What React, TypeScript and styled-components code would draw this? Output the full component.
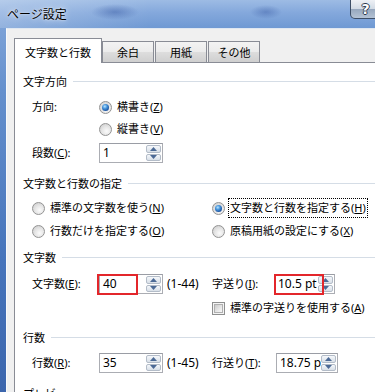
import React from 'react'
import styled, { createGlobalStyle, css } from 'styled-components'

const GlobalStyle = createGlobalStyle`
  html, body {
    margin: 0;
    padding: 0;
  }
  body {
    width: 375px;
    height: 392px;
    overflow: hidden;
    background: #f0f0f0;
    font-family: "Noto Sans", "Noto Sans CJK JP", sans-serif;
    color: #000;
  }
`

const Window = styled.div`
  width: 375px;
  height: 392px;
  overflow: hidden;
  display: flex;
  flex-direction: column;
  background: linear-gradient(180deg, #86a9db 0, #6590cd 90px, #4674bb 260px, #3c66ad 392px);
`

const TitleBar = styled.div`
  height: 28px;
  flex: none;
  display: flex;
  align-items: flex-start;
  background:
    radial-gradient(ellipse 24px 8px at 115px 12px, rgba(66, 100, 170, 0.55), transparent),
    radial-gradient(ellipse 16px 7px at 266px 12px, rgba(66, 100, 170, 0.5), transparent),
    linear-gradient(90deg, rgba(255, 255, 255, 0.25), rgba(255, 255, 255, 0) 40%),
    linear-gradient(180deg, #9dbbe4 0%, #84a8dc 45%, #6f99d3 100%);
`

const Title = styled.div`
  padding: 6px 0 0 7px;
  font-family: "Noto Sans CJK JP", sans-serif;
  font-size: 12px;
  line-height: 16px;
  text-shadow: 0 0 6px rgba(255, 255, 255, 0.9), 0 0 2px rgba(255, 255, 255, 0.8);
`

const HelpButton = styled.div`
  margin-left: auto;
  margin-right: -6px;
  width: 31px;
  height: 19px;
  box-sizing: border-box;
  border: 1px solid #3d4e66;
  border-top: none;
  border-radius: 0 0 0 5px;
  background: linear-gradient(180deg, #eef1f5 0%, #d3dbe5 48%, #97a8be 52%, #b5c3d5 100%);
  display: flex;
  justify-content: center;
  align-items: center;
  color: #fff;
  font: bold 14px "DejaVu Sans", sans-serif;
  text-shadow: 1px 0 0 #2d3a4e, -1px 0 0 #2d3a4e, 0 1px 0 #2d3a4e, 0 -1px 0 #2d3a4e;
`

const Body = styled.div`
  flex: 1;
  display: flex;
  padding-left: 6px;
`

const Client = styled.div`
  flex: 1;
  background: #f0f0f0;
  border-left: 1px solid #f8fafc;
  border-top: 1px solid #dfe7f1;
  padding: 9px 0 0 7px;
  overflow: hidden;
`

const Tabs = styled.div`
  display: flex;
  align-items: flex-end;
  gap: 1px;
  height: 24px;
  position: relative;
  z-index: 1;
`

const Tab = styled.div<{ $active?: boolean; $w: number }>`
  width: ${p => p.$w}px;
  box-sizing: border-box;
  border: 1px solid #898c95;
  border-bottom: none;
  font-size: 11px;
  line-height: 16px;
  display: flex;
  justify-content: center;
  align-items: center;
  ${p => p.$active ? css`
    height: 25px;
    margin-bottom: -1px;
    margin-right: -1px;
    padding-top: 3px;
    background: #fff;
  ` : css`
    height: 21px;
    padding-top: 1px;
    background: linear-gradient(180deg, #f3f3f3 0%, #ebebeb 50%, #dddddd 52%, #cfcfcf 100%);
  `}
`

const Panel = styled.div`
  width: 430px;
  height: 400px;
  box-sizing: border-box;
  background: #fff;
  border: 1px solid #898c95;
  padding: 8px 0 0 8px;
`

const Heading = styled.div<{ $mt: number }>`
  display: flex;
  align-items: center;
  height: 20px;
  margin-top: ${p => p.$mt}px;
  font-size: 11px;
  &::after {
    content: '';
    flex: 1;
    height: 1px;
    margin-left: 6px;
    background: #d5dde6;
  }
`

const Row = styled.div<{ $mt: number }>`
  display: flex;
  align-items: center;
  height: 20px;
  margin-top: ${p => p.$mt}px;
  padding-left: 9px;
  font-size: 11px;
  line-height: 16px;
  white-space: nowrap;
`

const Cell = styled.div<{ $w: number; $ml?: number }>`
  width: ${p => p.$w}px;
  margin-left: ${p => p.$ml ?? 0}px;
  flex: none;
  display: flex;
  align-items: center;
`

const Choice = styled.label`
  display: flex;
  align-items: center;
  gap: 5px;
`

const Radio = styled.span<{ $on?: boolean }>`
  width: 13px;
  height: 13px;
  box-sizing: border-box;
  flex: none;
  border-radius: 50%;
  border: 1px solid #939393;
  background: radial-gradient(circle at 60% 65%, #fbfbfb 0, #e6e6e6 45%, #cdcdcd 90%);
  display: flex;
  justify-content: center;
  align-items: center;
  &::after {
    content: '';
    display: ${p => (p.$on ? 'block' : 'none')};
    width: 7px;
    height: 7px;
    border-radius: 50%;
    background: radial-gradient(circle at 40% 35%, #b9e5ff 0, #4896dc 35%, #124593 80%);
  }
`

const Check = styled.span`
  width: 13px;
  height: 13px;
  box-sizing: border-box;
  flex: none;
  border: 1px solid #8e8f8f;
  background: #f4f4f4;
  padding: 1px;
  &::after {
    content: '';
    display: block;
    width: 9px;
    height: 9px;
    box-sizing: border-box;
    border: 1px solid #b0b0b0;
    background: linear-gradient(135deg, #cbcbcb 0%, #e6e6e6 55%, #f8f8f8 100%);
  }
`

const Caption = styled.span<{ $focus?: boolean }>`
  ${p => p.$focus && css`
    margin-left: -2px;
    padding: 1px 1px;
    border: 1px dotted #000;
  `}
`

const SpinBox = styled.div<{ $w: number }>`
  position: relative;
  width: ${p => p.$w}px;
  height: 20px;
  box-sizing: border-box;
  border: 1px solid #abadb3;
  border-top-color: #9a9da5;
  background: #fff;
  display: flex;
  flex: none;
`

const Value = styled.div`
  flex: 1;
  min-width: 0;
  overflow: hidden;
  padding-left: 3px;
  font-size: 12px;
  line-height: 18px;
  white-space: nowrap;
`

const Spinner = styled.div`
  width: 15px;
  flex: none;
  display: flex;
  flex-direction: column;
  gap: 1px;
  padding: 1px 1px 1px 0;
`

const SpinButton = styled.div`
  flex: 1;
  border: 1px solid #b3bcc8;
  border-radius: 2px;
  background: linear-gradient(180deg, #f6f8fb 0%, #e6ebf1 50%, #d9e0e8 100%);
  display: flex;
  justify-content: center;
  align-items: center;
`

const Mark = styled.div<{ $l: number; $w: number }>`
  position: absolute;
  left: ${p => p.$l}px;
  top: -1px;
  width: ${p => p.$w}px;
  height: 21px;
  box-sizing: border-box;
  border: 2px solid #e3262b;
`

const Range = styled.span`
  font-size: 12px;
`

const Arrow = ({ up }: { up?: boolean }) => (
  <svg width="7" height="4" viewBox="0 0 7 4">
    <polygon points={up ? '0,4 3.5,0 7,4' : '0,0 3.5,4 7,0'} fill="#4c6a96" />
  </svg>
)

const Spin = ({ w, value, mark }: { w: number; value: string; mark?: [number, number] }) => (
  <SpinBox $w={w}>
    <Value>{value}</Value>
    <Spinner>
      <SpinButton><Arrow up /></SpinButton>
      <SpinButton><Arrow /></SpinButton>
    </Spinner>
    {mark && <Mark $l={mark[0]} $w={mark[1]} />}
  </SpinBox>
)

export default function App() {
  return (
    <Window>
      <GlobalStyle />
      <TitleBar>
        <Title>ページ設定</Title>
        <HelpButton>?</HelpButton>
      </TitleBar>
      <Body>
        <Client>
          <Tabs>
            <Tab $active $w={88}>文字数と行数</Tab>
            <Tab $w={52}>余白</Tab>
            <Tab $w={52}>用紙</Tab>
            <Tab $w={52}>その他</Tab>
          </Tabs>
          <Panel>
            <Heading $mt={0}>文字方向</Heading>
            <Row $mt={6}>
              <Cell $w={67}>方向:</Cell>
              <Choice><Radio $on /><Caption>横書き(<u>Z</u>)</Caption></Choice>
            </Row>
            <Row $mt={2}>
              <Cell $w={67} />
              <Choice><Radio /><Caption>縦書き(<u>V</u>)</Caption></Choice>
            </Row>
            <Row $mt={4}>
              <Cell $w={67}><span>段数(<u>C</u>):</span></Cell>
              <Spin w={64} value="1" />
            </Row>

            <Heading $mt={10}>文字数と行数の指定</Heading>
            <Row $mt={5}>
              <Cell $w={180}>
                <Choice><Radio /><Caption>標準の文字数を使う(<u>N</u>)</Caption></Choice>
              </Cell>
              <Choice><Radio $on /><Caption $focus>文字数と行数を指定する(<u>H</u>)</Caption></Choice>
            </Row>
            <Row $mt={3}>
              <Cell $w={180}>
                <Choice><Radio /><Caption>行数だけを指定する(<u>O</u>)</Caption></Choice>
              </Cell>
              <Choice><Radio /><Caption>原稿用紙の設定にする(<u>X</u>)</Caption></Choice>
            </Row>

            <Heading $mt={6}>文字数</Heading>
            <Row $mt={7}>
              <Cell $w={67}><span>文字数(<u>E</u>):</span></Cell>
              <Spin w={64} value="40" mark={[-3, 41]} />
              <Cell $w={45} $ml={4}><Range>(1-44)</Range></Cell>
              <Cell $w={62}><span>字送り(<u>I</u>):</span></Cell>
              <Spin w={61} value="10.5 pt" mark={[-1, 50]} />
            </Row>
            <Row $mt={4}>
              <Cell $w={180} />
              <Choice><Check /><Caption>標準の字送りを使用する(<u>A</u>)</Caption></Choice>
            </Row>

            <Heading $mt={9}>行数</Heading>
            <Row $mt={6}>
              <Cell $w={67}><span>行数(<u>R</u>):</span></Cell>
              <Spin w={64} value="35" />
              <Cell $w={45} $ml={4}><Range>(1-45)</Range></Cell>
              <Cell $w={64}><span>行送り(<u>T</u>):</span></Cell>
              <Spin w={62} value="18.75 pt" />
            </Row>

            <Heading $mt={10}>プレビュー</Heading>
          </Panel>
        </Client>
      </Body>
    </Window>
  )
}
